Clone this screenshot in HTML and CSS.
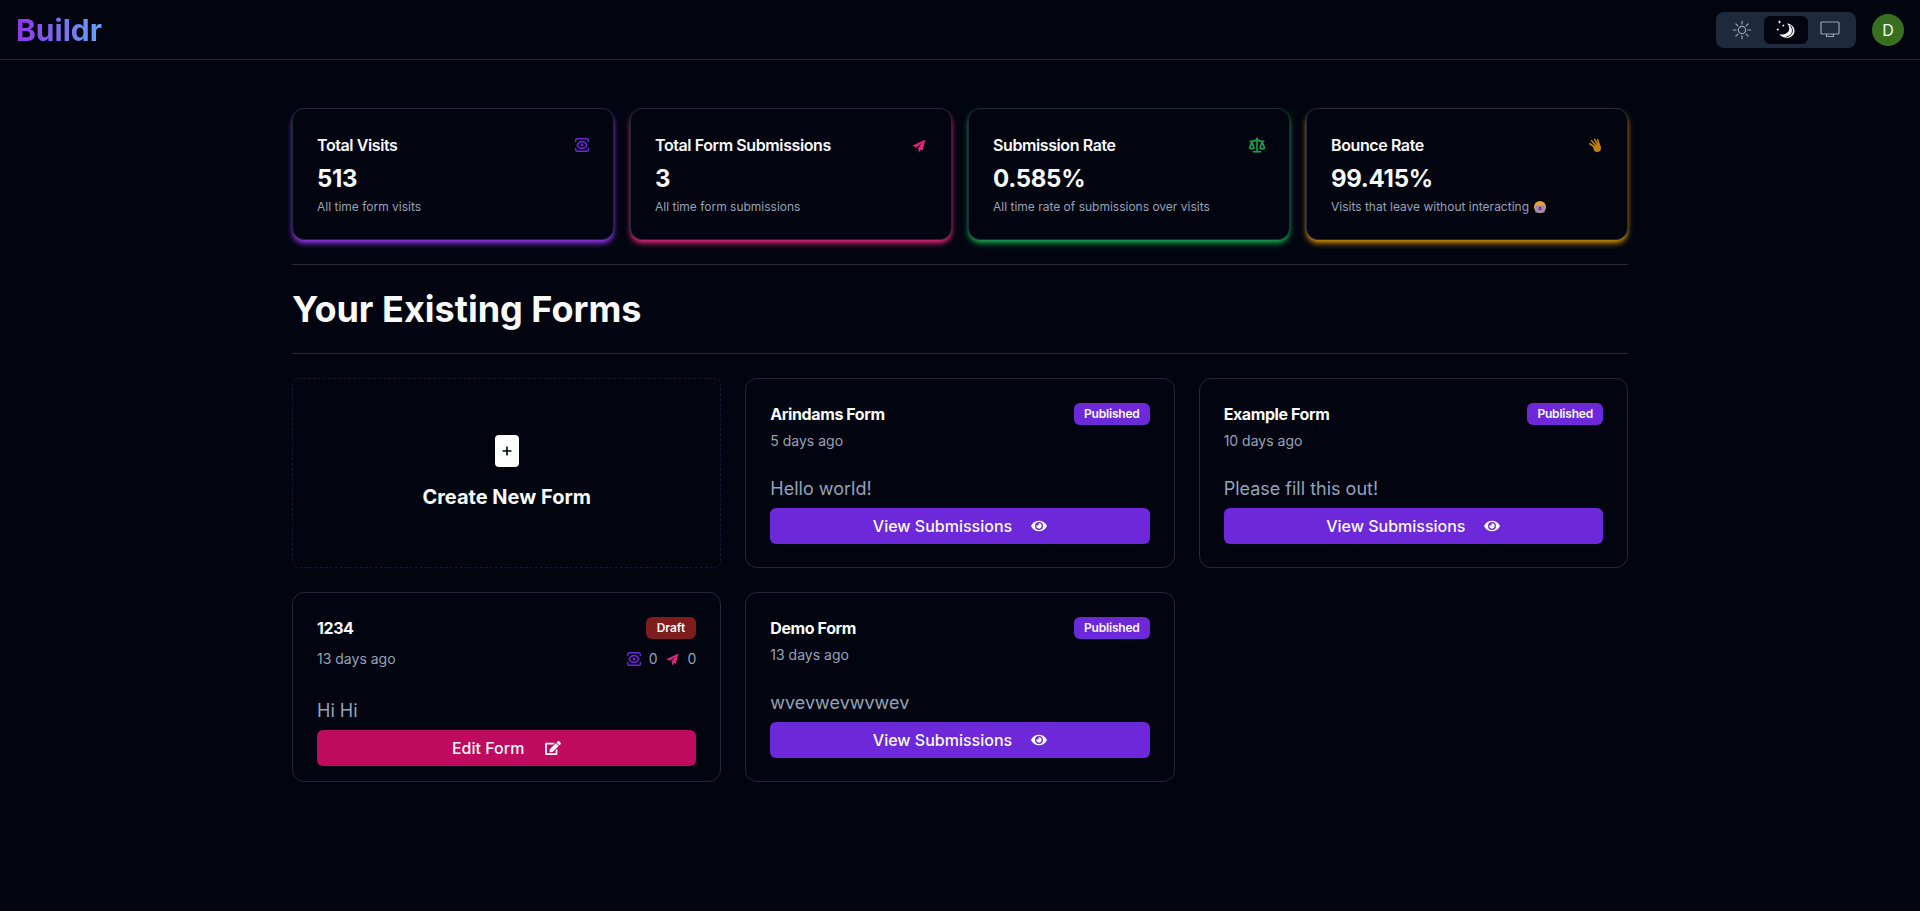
FILE: index.html
```html
<!DOCTYPE html>
<html>

<head>
	<title>Buildr</title>
	<link rel="stylesheet" href="styles.css">
</head>

<body>
	<svg class="defs">
		<defs>
			<g id="i-view" fill="none" stroke="currentColor" stroke-width="2" stroke-linecap="round" stroke-linejoin="round">
				<path d="M5 12s2.545-5 7-5c4.454 0 7 5 7 5s-2.546 5-7 5c-4.455 0-7-5-7-5z" />
				<path d="M12 13a1 1 0 1 0 0-2 1 1 0 0 0 0 2z" />
				<path d="M21 17v2a2 2 0 0 1-2 2H5a2 2 0 0 1-2-2v-2" />
				<path d="M21 7V5a2 2 0 0 0-2-2H5a2 2 0 0 0-2 2v2" />
			</g>
			<path id="i-send" fill="currentColor" d="M23 2.500 2 12.500l7 2.600 8-7-5.800 8.600 1.600 6.300 2.600-4.200 3.200 1.200z" />
			<path id="i-eye" fill="currentColor" d="M572.52 241.4C518.29 135.59 410.93 64 288 64S57.68 135.64 3.48 241.41a32.35 32.35 0 0 0 0 29.19C57.71 376.41 165.07 448 288 448s230.32-71.64 284.52-177.41a32.35 32.35 0 0 0 0-29.19zM288 400a144 144 0 1 1 144-144 143.93 143.93 0 0 1-144 144zm0-240a95.31 95.31 0 0 0-25.31 3.79 47.85 47.85 0 0 1-66.9 66.9A95.78 95.78 0 1 0 288 160z" />
		</defs>
	</svg>

	<nav class="navbar">
		<a class="logo">Buildr</a>
		<div class="nav-right">
			<div class="theme-tabs">
				<button class="theme-tab">
					<svg width="22" height="22" viewBox="0 0 24 24" fill="none" stroke="currentColor" stroke-width="1.3" stroke-linecap="round">
						<circle cx="12" cy="12" r="4" />
						<path d="M12 2.500v3M12 18.500v3M2.500 12h3M18.500 12h3M5.300 5.300l2.100 2.100M16.600 16.600l2.100 2.100M5.300 18.700l2.100-2.100M16.600 7.400l2.100-2.100" />
					</svg>
				</button>
				<button class="theme-tab active">
					<svg width="22" height="22" viewBox="0 0 24 24" fill="none">
						<path fill="#fff" d="M13 4.700C18 5.500 21.300 9 21.300 13c0 4.500-4.300 7.500-8.300 7.500-3.500 0-6.500-1.500-8-3.800 5 .8 9.500-1.200 10.500-4.700.5-2.500-.5-5.500-2.500-7.300z" />
						<path stroke="#020510" stroke-width="1" d="M16.300 6.700c2.200 2.300 3.200 5.300 2.500 7.800-.8 3-3.800 4.500-6.300 4.800" />
						<path fill="#fff" d="M4.900 1.200l.6 1.500 1.500.6-1.500.6-.6 1.500-.6-1.500-1.500-.6 1.500-.6zM9 5.500l.5 1.200 1.200.5-1.200.5L9 8.900l-.5-1.200-1.200-.5 1.200-.5zM3.100 9.800l.5 1.200 1.200.5-1.200.5-.5 1.200-.5-1.200-1.200-.5 1.200-.5z" />
					</svg>
				</button>
				<button class="theme-tab">
					<svg width="20" height="17" viewBox="0 0 20 17" fill="none" stroke="currentColor" stroke-width="1.200" stroke-linejoin="round">
						<rect x="1" y="1" width="18" height="12" rx="1" />
						<path d="M6.500 13v2.500h7V13" />
					</svg>
				</button>
			</div>
			<div class="avatar">D</div>
		</div>
	</nav>

	<main class="container">
		<section class="stats">
			<div class="stat-card visits">
				<div class="stat-head">
					<h3>Total Visits</h3>
					<svg class="stat-icon" width="14" height="14" viewBox="2 2 20 20"><use href="#i-view" /></svg>
				</div>
				<div class="stat-value">513</div>
				<p class="stat-help">All time form visits</p>
			</div>
			<div class="stat-card submissions">
				<div class="stat-head">
					<h3>Total Form Submissions</h3>
					<svg class="stat-icon" width="15" height="15" viewBox="0 0 24 24"><use href="#i-send" /></svg>
				</div>
				<div class="stat-value">3</div>
				<p class="stat-help">All time form submissions</p>
			</div>
			<div class="stat-card rate">
				<div class="stat-head">
					<h3>Submission Rate</h3>
					<svg class="stat-icon" width="18" height="18" viewBox="0 0 24 24" fill="none" stroke="currentColor" stroke-width="2.200" stroke-linecap="round" stroke-linejoin="round">
						<path d="m16 16 3-8 3 8c-.87.65-1.920 1-3 1s-2.130-.35-3-1Z" />
						<path d="m2 16 3-8 3 8c-.87.65-1.920 1-3 1s-2.130-.35-3-1Z" />
						<path d="M7 21h10" />
						<path d="M12 3v18" />
						<path d="M3 7h2c2 0 5-1 7-2 2 1 5 2 7 2h2" />
					</svg>
				</div>
				<div class="stat-value">0.585%</div>
				<p class="stat-help">All time rate of submissions over visits</p>
			</div>
			<div class="stat-card bounce">
				<div class="stat-head">
					<h3>Bounce Rate</h3>
					<svg class="stat-icon" width="14" height="15" viewBox="0 0 20 22" fill="currentColor">
						<path d="M7 14 16 8l3 5-1 6-5 2-4-2z" />
						<path fill="none" stroke="currentColor" stroke-width="2.400" stroke-linecap="round" d="M12 15 2.500 8.500M13 13 5 4M14.500 11 9.500 2M16 10 14 2.500" />
					</svg>
				</div>
				<div class="stat-value">99.415%</div>
				<p class="stat-help">Visits that leave without interacting
					<svg class="emoji" width="12" height="12" viewBox="0 0 12 12">
						<circle cx="6" cy="6" r="6" fill="#e9a23b" />
						<path fill="#7c95dc" d="M1.500 4.500h3V11.500h-3zM7.500 4.500h3V11.500h-3z" />
						<ellipse cx="6" cy="7.500" rx="1.500" ry="2.500" fill="#a0288f" />
					</svg>
				</p>
			</div>
		</section>

		<hr class="divider">
		<h2 class="page-title">Your Existing Forms</h2>
		<hr class="divider">

		<section class="forms">
			<button class="create-card">
				<span class="create-plus">
					<svg width="12" height="12" viewBox="0 0 12 12" stroke="#020817" stroke-width="1.600"><path d="M6 1.500v9M1.500 6h9" /></svg>
				</span>
				<span class="create-label">Create New Form</span>
			</button>

			<div class="form-card">
				<div class="form-top">
					<h4>Arindams Form</h4>
					<span class="badge published">Published</span>
				</div>
				<div class="form-date">5 days ago</div>
				<p class="form-desc">Hello world!</p>
				<a class="form-btn view">View Submissions <svg width="16" height="14" viewBox="0 0 576 512"><use href="#i-eye" /></svg></a>
			</div>

			<div class="form-card">
				<div class="form-top">
					<h4>Example Form</h4>
					<span class="badge published">Published</span>
				</div>
				<div class="form-date">10 days ago</div>
				<p class="form-desc">Please fill this out!</p>
				<a class="form-btn view">View Submissions <svg width="16" height="14" viewBox="0 0 576 512"><use href="#i-eye" /></svg></a>
			</div>

			<div class="form-card">
				<div class="form-top">
					<h4>1234</h4>
					<span class="badge draft">Draft</span>
				</div>
				<div class="form-date with-counts">
					<span>13 days ago</span>
					<span class="counts">
						<svg class="count-view" width="14" height="14" viewBox="2 2 20 20"><use href="#i-view" /></svg>
						<span>0</span>
						<svg class="count-send" width="14" height="14" viewBox="0 0 24 24"><use href="#i-send" /></svg>
						<span>0</span>
					</span>
				</div>
				<p class="form-desc">Hi Hi</p>
				<a class="form-btn edit">Edit Form
					<svg width="16" height="14" viewBox="0 0 576 512" fill="currentColor">
						<path d="M402.6 83.2l90.2 90.2c3.8 3.8 3.8 10 0 13.8L274.4 405.6l-92.8 10.3c-12.4 1.4-22.9-9.1-21.5-21.5l10.3-92.8L388.8 83.2c3.8-3.8 10-3.8 13.8 0zm162-22.9l-48.8-48.8c-15.2-15.2-39.9-15.2-55.2 0l-35.4 35.4c-3.8 3.8-3.8 10 0 13.8l90.2 90.2c3.8 3.8 10 3.8 13.8 0l35.4-35.4c15.2-15.3 15.2-40 0-55.2zM384 346.2V448H64V128h229.8c3.2 0 6.2-1.3 8.5-3.5l40-40c7.6-7.6 2.2-20.5-8.5-20.5H48C21.5 64 0 85.5 0 112v352c0 26.5 21.5 48 48 48h352c26.5 0 48-21.5 48-48V306.2c0-10.7-12.9-16-20.5-8.5l-40 40c-2.2 2.3-3.5 5.3-3.5 8.5z" />
					</svg>
				</a>
			</div>

			<div class="form-card">
				<div class="form-top">
					<h4>Demo Form</h4>
					<span class="badge published">Published</span>
				</div>
				<div class="form-date">13 days ago</div>
				<p class="form-desc">wvevwevwvwev</p>
				<a class="form-btn view">View Submissions <svg width="16" height="14" viewBox="0 0 576 512"><use href="#i-eye" /></svg></a>
			</div>
		</section>
	</main>
</body>

</html>
```

FILE: styles.css
```css
:root {
	--bg: #020510;
	--border: #1e293b;
	--line: #262a36;
	--muted: #94a3b8;
	--text: #f8fafc;
	--violet: #6d28d9;
	--pink: #be0a5f;
}

* {
	box-sizing: border-box;
}

html,
body {
	height: 100%;
}

body {
	margin: 0;
	background-color: var(--bg);
	color: var(--text);
	font-family: 'Inter', sans-serif;
}

.defs {
	display: none;
}

h2,
h3,
h4,
p {
	margin: 0;
}

/* navbar */
.navbar {
	height: 60px;
	display: flex;
	justify-content: space-between;
	align-items: center;
	padding: 0 16px;
	border-bottom: 1px solid var(--line);
}

.logo {
	font-size: 30px;
	line-height: 36px;
	font-weight: 700;
	background: linear-gradient(to right, #9333ea, #60a5fa);
	-webkit-background-clip: text;
	background-clip: text;
	color: transparent;
}

.nav-right {
	display: flex;
	align-items: center;
	gap: 16px;
}

.theme-tabs {
	display: grid;
	grid-template-columns: repeat(3, 44px);
	padding: 4px;
	height: 36px;
	background-color: var(--border);
	border-radius: 8px;
}

.theme-tab {
	display: flex;
	align-items: center;
	justify-content: center;
	padding: 0;
	border: none;
	border-radius: 6px;
	background: none;
	color: #94a3b8;
}

.theme-tab.active {
	background-color: var(--bg);
	color: #fff;
}

.avatar {
	width: 32px;
	height: 32px;
	display: flex;
	align-items: center;
	justify-content: center;
	border-radius: 50%;
	background-color: #38701f;
	font-size: 16px;
}

/* page */
.container {
	width: 1400px;
	margin: 0 auto;
	padding: 48px 32px 0;
}

.stats {
	display: grid;
	grid-template-columns: repeat(4, 1fr);
	gap: 16px;
}

.stat-card {
	padding: 24px;
	background-color: var(--bg);
	border: 1px solid var(--border);
	border-radius: 12px;
	box-shadow: 0 4px 6px -1px var(--glow), 0 2px 4px -2px var(--glow);
}

.stat-card.visits {
	--glow: #9333ea;
}

.stat-card.submissions {
	--glow: #db2777;
}

.stat-card.rate {
	--glow: #16a34a;
}

.stat-card.bounce {
	--glow: #ca8a04;
}

.stat-head {
	display: flex;
	justify-content: space-between;
	align-items: center;
	height: 24px;
	margin-bottom: 6px;
}

.stat-head h3 {
	font-size: 16px;
	font-weight: 600;
	letter-spacing: -0.4px;
}

.visits .stat-icon,
.count-view {
	color: var(--violet);
}

.submissions .stat-icon,
.count-send {
	color: #db2777;
}

.submissions .stat-icon {
	margin-right: 1px;
}

.rate .stat-icon {
	color: #16a34a;
	margin-right: -1px;
}

.bounce .stat-icon {
	color: #c2810a;
	margin-right: 1px;
}

.stat-value {
	font-size: 24px;
	line-height: 32px;
	font-weight: 700;
	letter-spacing: -0.3px;
}

.stat-help {
	margin-top: 4px;
	font-size: 12px;
	line-height: 16px;
	color: var(--muted);
}

.emoji {
	vertical-align: -2px;
	margin-left: 2px;
}

.divider {
	height: 1px;
	margin: 24px 0;
	border: none;
	background-color: var(--line);
}

.page-title {
	font-size: 36px;
	line-height: 40px;
	font-weight: 700;
}

/* forms grid */
.forms {
	display: grid;
	grid-template-columns: repeat(3, 1fr);
	grid-auto-rows: 190px;
	gap: 24px;
}

.create-card {
	display: flex;
	flex-direction: column;
	align-items: center;
	justify-content: center;
	gap: 16px;
	border: 1px dashed #17143d;
	border-radius: 6px;
	background: none;
	font-family: inherit;
	color: var(--text);
}

.create-plus {
	width: 24px;
	height: 32px;
	display: flex;
	align-items: center;
	justify-content: center;
	background-color: #fff;
	border-radius: 4px;
}

.create-label {
	font-size: 20px;
	line-height: 28px;
	font-weight: 700;
}

.form-card {
	height: 190px;
	padding: 24px;
	border: 1px solid var(--border);
	border-radius: 12px;
}

.form-top {
	display: flex;
	justify-content: space-between;
	align-items: center;
	height: 22px;
}

.form-top h4 {
	font-size: 16px;
	font-weight: 700;
	letter-spacing: -0.4px;
}

.badge {
	height: 22px;
	display: flex;
	align-items: center;
	padding: 0 10px 1px;
	border-radius: 6px;
	font-size: 12px;
	font-weight: 600;
	letter-spacing: -0.2px;
}

.badge.published {
	background-color: var(--violet);
}

.badge.draft {
	padding: 0 11px 1px;
	letter-spacing: 0;
	background-color: #7f1d1d;
}

.form-date {
	margin-top: 6px;
	font-size: 14px;
	line-height: 20px;
	color: var(--muted);
}

.form-date.with-counts {
	height: 28px;
	display: flex;
	justify-content: space-between;
	align-items: center;
}

.counts {
	display: flex;
	align-items: center;
	gap: 8px;
}

.form-desc {
	margin-top: 24px;
	font-size: 18px;
	line-height: 28px;
	color: var(--muted);
}

.form-btn {
	height: 36px;
	margin-top: 5px;
	display: flex;
	align-items: center;
	justify-content: center;
	gap: 19px;
	border-radius: 6px;
	font-size: 16px;
	font-weight: 500;
	color: var(--text);
}

.form-btn.view {
	background-color: var(--violet);
}

.form-btn.edit {
	gap: 21px;
	background-color: var(--pink);
}
```
